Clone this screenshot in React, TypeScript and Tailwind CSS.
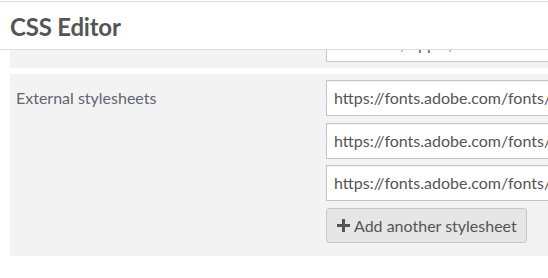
import { FC } from 'react';

const urls = [
	'https://fonts.adobe.com/fonts/lato',
	'https://fonts.adobe.com/fonts/source-sans',
	'https://fonts.adobe.com/fonts/open-sans',
];

const UrlInput: FC<{ value: string; className?: string }> = ({ value, className }) => (
	<div
		className={`w-[300px] h-[36px] shrink-0 bg-white border border-[#c6c6c6] shadow-[inset_0_1px_1px_rgba(0,0,0,0.06)] pl-[7px] flex items-center text-[16px] text-[#555] whitespace-nowrap overflow-hidden ${className ?? ''}`}
	>
		{value}
	</div>
);

export default function App() {
	return (
		<div className="w-[548px] h-[278px] overflow-hidden bg-white font-['Lato',sans-serif]">
			<header className="mt-px h-[49px] border-t border-b border-[#dedede] px-[10px] pt-[3px] flex items-center">
				<h1 className="text-[24px] font-bold text-[#555] tracking-[-0.2px]">CSS Editor</h1>
			</header>

			<div className="ml-[10px] h-[18px] bg-[#f3f3f3] pl-[316px] overflow-hidden">
				<UrlInput value="Helvetica, Apple, sans-serif" className="-mt-[24px]" />
			</div>

			<div className="mt-[6px] ml-[10px] h-[182px] bg-[#f3f3f3] flex">
				<div className="w-[316px] shrink-0 pl-[6px] pt-[6px]">
					<div className="h-[36px] flex items-center text-[16px] text-[#5f6670]">External stylesheets</div>
				</div>
				<div className="flex flex-col pt-[6px]">
					<UrlInput value={urls[0]} />
					<UrlInput value={urls[1]} className="mt-[7px]" />
					<UrlInput value={urls[2]} className="mt-[6px]" />
					<button className="mt-[7px] w-[201px] h-[35px] rounded-[3px] border border-[#c8c8c8] bg-[#e6e6e6] flex items-center pl-[10px] gap-[4px] text-[16px] text-[#555]">
						<svg width="13" height="13" viewBox="0 0 13 13" className="shrink-0">
							<rect x="5" y="0" width="3" height="13" fill="#555" />
							<rect x="0" y="5" width="13" height="3" fill="#555" />
						</svg>
						Add another stylesheet
					</button>
				</div>
			</div>
		</div>
	);
}
